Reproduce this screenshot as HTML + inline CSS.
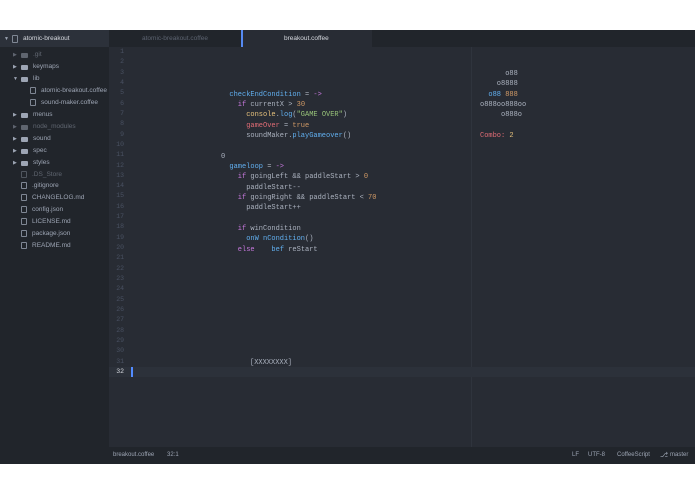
<!DOCTYPE html>
<html><head><meta charset="utf-8"><style>
*{margin:0;padding:0;box-sizing:border-box}
body{width:695px;height:494px;background:#fff;position:relative;overflow:hidden;font-family:"Liberation Sans",sans-serif}
.abs{position:absolute}
#side{left:0;top:30px;width:109px;height:434px;background:#21252b}
#ed{left:109px;top:30px;width:586px;height:417px;background:#282c34}
#tabs{left:109px;top:30px;width:586px;height:17px;background:#21252b}
#status{left:109px;top:447px;width:586px;height:17px;background:#21252b;font-size:6px;color:#9da5b4}
.t{position:absolute;font-size:6.5px;white-space:nowrap;color:#9da5b4;line-height:12px}
.ic{position:absolute;width:7px;height:5px;background:#9da5b4;border-radius:1px}
.fi{position:absolute;width:6px;height:7px;border:1px solid #7f8794;border-radius:1px}
.ar{position:absolute;font-size:5px;color:#9da5b4}
.ln{position:absolute;left:112px;width:12px;text-align:right;font-family:"Liberation Mono",monospace;font-size:6.5px;color:#495162}
.c{position:absolute;font-family:"Liberation Mono",monospace;font-size:7px;white-space:pre;color:#abb2bf;line-height:10px}
.b{color:#61afef}.p{color:#c678dd}.y{color:#e5c07b}.o{color:#d19a66}.g{color:#98c379}.r{color:#e06c75}
</style></head><body>
<div id="side" class="abs"></div>
<div class="abs" style="left:0;top:30px;width:109px;height:17px;background:#2c313a"></div>
<div id="ed" class="abs"></div>
<div id="tabs" class="abs"></div>
<div class="abs" style="left:241px;top:30px;width:131px;height:17px;background:#282c34"></div>
<div class="abs" style="left:241px;top:30px;width:2px;height:17px;background:#568af2"></div>
<div class="t" style="left:142px;top:33px;color:#5c6370">atomic-breakout.coffee</div>
<div class="t" style="left:284px;top:33px;color:#d7dae0">breakout.coffee</div>
<div class="abs" style="left:471px;top:47px;width:1px;height:400px;background:#2f343d"></div>
<div class="abs" style="left:109px;top:367px;width:586px;height:10px;background:#2c313a"></div>
<div class="abs" style="left:131px;top:367px;width:2px;height:10px;background:#528bff"></div>

<div class="ar" style="left:4px;top:36px">▼</div>
<div class="fi" style="left:12px;top:35px;width:6px;height:8px"></div>
<div class="t" style="left:23px;top:33px;color:#d7dae0">atomic-breakout</div>
<div id="tree"></div>
<div id="status" class="abs"><span class="abs" style="left:4px;top:5px">breakout.coffee</span><span class="abs" style="left:58px;top:5px">32:1</span>
<span class="abs" style="left:463px;top:5px">LF</span><span class="abs" style="left:479px;top:5px">UTF-8</span><span class="abs" style="left:508px;top:5px">CoffeeScript</span><span class="abs" style="left:551px;top:4px;font-size:7px">&#x2387;</span><span class="abs" style="left:561px;top:5px">master</span></div>

<script>
var items=[["f",".git",1,1],["f","keymaps",1,0],["o","lib",1,0],["x","atomic-breakout.coffee",2,0],["x","sound-maker.coffee",2,0],["f","menus",1,0],["f","node_modules",1,1],["f","sound",1,0],["f","spec",1,0],["f","styles",1,0],["x",".DS_Store",1,1],["x",".gitignore",1,0],["x","CHANGELOG.md",1,0],["x","config.json",1,0],["x","LICENSE.md",1,0],["x","package.json",1,0],["x","README.md",1,0]];
var h="";items.forEach(function(it,i){var y=49+i*11.95;var lv=it[2];var op=it[3]?"opacity:.5;":"";
if(it[0]!="x"){h+='<div class="ar" style="'+op+'left:'+(lv==1?13:22)+'px;top:'+(y+3)+'px">'+(it[0]=="o"?"▼":"▶")+'</div><div class="ic" style="'+op+'left:21px;top:'+(y+4)+'px"></div>';
h+='<div class="t" style="'+op+'left:33px;top:'+y+'px">'+it[1]+'</div>';}
else{var x=lv==2?30:21;h+='<div class="fi" style="'+op+'left:'+x+'px;top:'+(y+2)+'px"></div><div class="t" style="'+op+'left:'+(x+11)+'px;top:'+y+'px">'+it[1]+'</div>';}});
for(var i=1;i<=32;i++){var y=48+(i-1)*10.32;h+='<div class="ln" style="top:'+y+'px;'+(i==32?'color:#d7dae0':'')+'">'+i+'</div>';}
function L(n,x,s){return '<div class="c" style="left:'+x+'px;top:'+(48.5+(n-1)*10.32)+'px">'+s+'</div>';}
var cw=4.2,b=221;
h+=L(5,b+2*cw,'<span class="b">checkEndCondition</span> = <span class="p">-&gt;</span>');
h+=L(6,b+4*cw,'<span class="p">if</span> currentX &gt; <span class="o">30</span>');
h+=L(7,b+6*cw,'<span class="y">console</span>.<span class="b">log</span>(<span class="g">"GAME OVER"</span>)');
h+=L(8,b+6*cw,'<span class="r">gameOver</span> = <span class="o">true</span>');
h+=L(9,b+6*cw,'soundMaker.<span class="b">playGameover</span>()');
h+=L(11,b,'0');
h+=L(12,b+2*cw,'<span class="b">gameloop</span> = <span class="p">-&gt;</span>');
h+=L(13,b+4*cw,'<span class="p">if</span> goingLeft &amp;&amp; paddleStart &gt; <span class="o">0</span>');
h+=L(14,b+6*cw,'paddleStart--');
h+=L(15,b+4*cw,'<span class="p">if</span> goingRight &amp;&amp; paddleStart &lt; <span class="o">70</span>');
h+=L(16,b+6*cw,'paddleStart++');
h+=L(18,b+4*cw,'<span class="p">if</span> winCondition');
h+=L(19,b+6*cw,'<span class="b">onW nCondition</span>()');
h+=L(20,b+4*cw,'<span class="p">else</span>    <span class="b">bef</span> reStart');
h+=L(31,250,'[XXXXXXXX]');
var a=480;
h+=L(3,a+6*cw,'o88');h+=L(4,a+4*cw,'o8888');h+=L(5,a+2*cw,'<span class="b">o88</span> <span class="o">888</span>');
h+=L(6,a,'o888oo888oo');h+=L(7,a+5*cw,'o888o');h+=L(9,a,'<span class="r">Combo:</span> <span class="y">2</span>');
document.getElementById("tree").outerHTML=h;
</script>
</body></html>
